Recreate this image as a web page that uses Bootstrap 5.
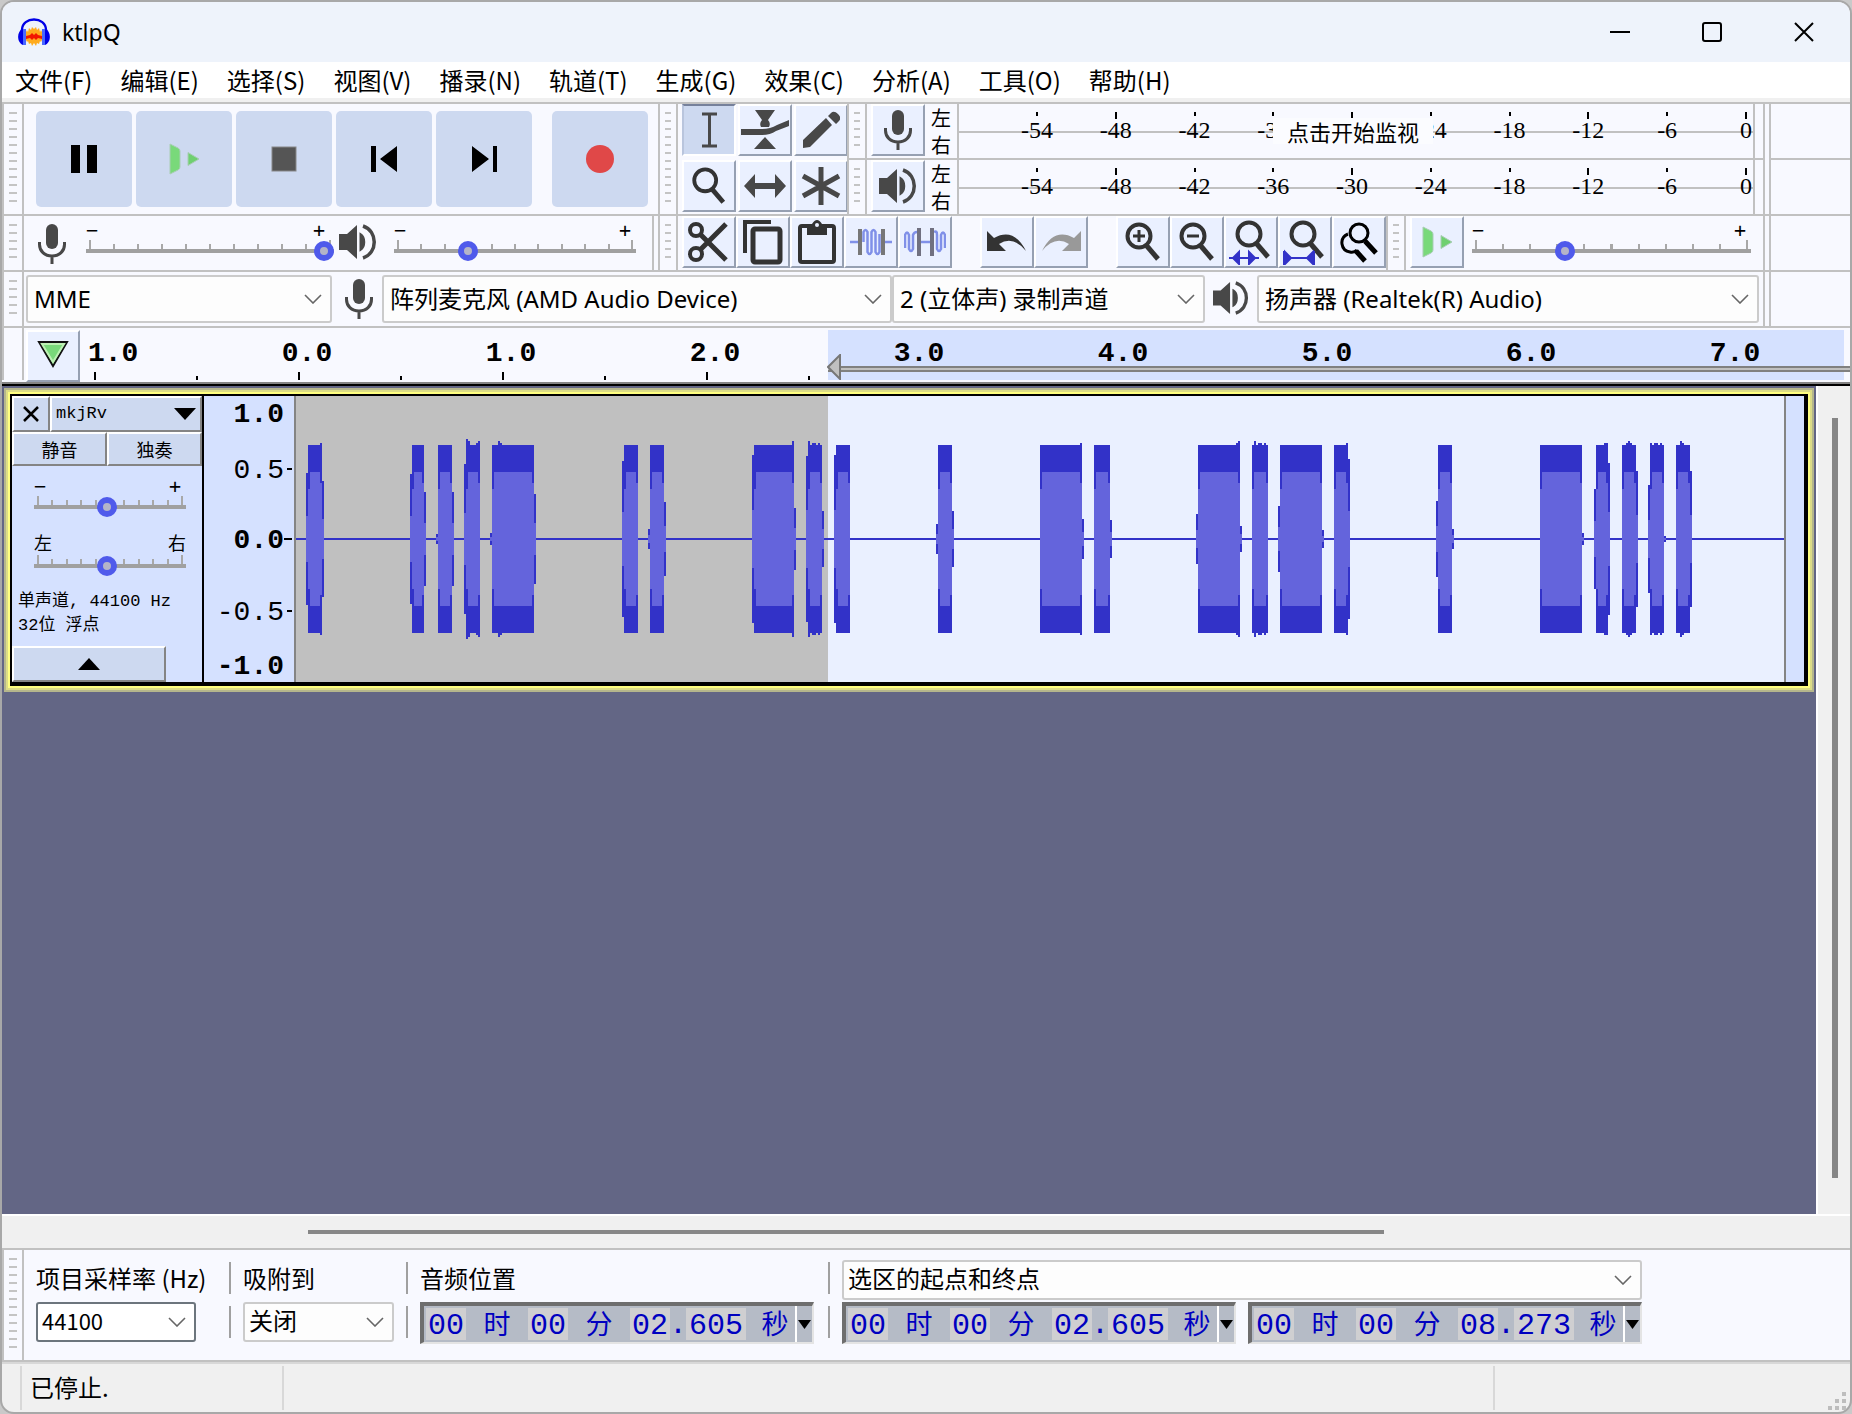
<!DOCTYPE html>
<html lang="zh-CN">
<head>
<meta charset="utf-8">
<meta name="viewport" content="width=device-width, initial-scale=1">
<title>ktlpQ</title>
<link rel="stylesheet" href="https://cdn.jsdelivr.net/npm/bootstrap@5.3.0/dist/css/bootstrap.min.css">
<style>
:root{--line:#c1c1c1;--face:#f8f9ff;--btn:#eaf0ff;--press:#cdd9f0;--sel:#d5e1ff;--ink:#484848}
html{background:#c9c9c9}
body{background:transparent;color:#000;font-family:"Noto Sans","Noto Sans CJK SC",sans-serif;font-size:23px;line-height:32px;overflow:hidden}
.app{border:2px solid #a8a8a8;border-radius:14px;background:#f0f0f0;overflow:hidden}
.titlebar{height:60px;background:#eef3fb}
.titlebar .caption{font-size:23px}
.win-btn{width:92px;height:58px;border-radius:0}
.menus{height:36px;background:#fff;font-family:"Noto Sans CJK SC",sans-serif;font-size:24px;padding-left:13px;gap:28px}
.menus a{color:#000;line-height:36px;white-space:nowrap}
.tools{background:var(--face);border-top:2px solid var(--line)}
.h-line{border-bottom:2px solid var(--line)}
.grip{width:20px;flex:none;border-right:2px solid var(--line);border-left:2px solid var(--line);padding:8px 5px}
.grip i{display:block;height:100%;background:repeating-linear-gradient(#c4c4c4 0 2px,transparent 2px 8px)}
.grip-first{width:22px}
.strip{height:56px}
.double{height:112px}
.big{width:96px;height:96px;background:var(--press);border-radius:5px;flex:none}
.tool{width:54px;height:52px;flex:none;background:var(--btn);border:2px solid;border-color:#fff #96a0b2 #96a0b2 #fff;border-radius:0}
.tool.on{background:var(--press);border-color:#76819b #fff #fff #b9c5dd}
.tool:hover{background:var(--btn);border-color:#fff #96a0b2 #96a0b2 #fff}
.toolgrid{width:165px;display:grid;grid-template-columns:56px 56px 53px;grid-template-rows:56px 56px}
.end{width:87px;flex:none;display:flex}
.end::before{content:"";width:8px;border-left:2px solid var(--line);border-right:2px solid var(--line)}
.lr{width:32px;font-family:"Noto Sans CJK SC",sans-serif;font-size:20px;line-height:27px;text-align:center}
.meter{position:relative;height:54px;border-left:2px solid var(--line);border-right:2px solid var(--line);background:linear-gradient(var(--line),var(--line)) 0 27px/100% 2px no-repeat;padding:8px 7px 0 78px;font-family:"Liberation Serif",serif;font-size:24px}
.meter span{width:0;display:flex;flex-direction:column;align-items:center;line-height:28px}
.meter span::before{content:"";width:2px;height:4px;background:#000;flex:none}
.meter span:nth-child(3n+2)::before,.meter span:last-of-type::before{height:7px;margin-bottom:-3px}
.hint{position:absolute;left:314px;top:14px;width:160px;height:26px;line-height:24px;text-align:center;background:#fbfcff;border:0;padding:0;font-family:"Noto Sans CJK SC",sans-serif;font-size:22px}
.slide{display:flex;flex-direction:column;min-width:0}
.slide .signs{display:flex;justify-content:space-between;padding-right:5px;font:20px/20px "DejaVu Sans Mono",monospace;height:20px}
.ticks{height:9px;padding:0 3px}
.ticks::before{content:"";display:block;height:9px;background:repeating-linear-gradient(to right,#a8a8a8 0 2px,transparent 2px calc((100% - 2px)/10)) 0 4px no-repeat,linear-gradient(#a8a8a8,#a8a8a8) 0 0/2px 9px no-repeat,linear-gradient(#a8a8a8,#a8a8a8) 100% 0/2px 9px no-repeat}
.slide input{appearance:none;-webkit-appearance:none;width:100%;height:20px;margin:-8px 0 0;background:linear-gradient(#a0a0a0,#a0a0a0) 0 8px/100% 4px no-repeat;display:block}
.slide input::-webkit-slider-thumb{-webkit-appearance:none;width:20px;height:20px;border-radius:50%;border:6px solid #4f5aeb;background:#b4b4c8}
.in-icon{margin:8px 20px 0 14px}
.out-icon{margin:8px 17px 0 5px}
.devices{padding:3px 4px 0 2px}
.combo{height:48px;border:2px solid #cbcbcb;border-radius:3px;color:#000;font:inherit;font-size:24px;line-height:40px;padding:0 36px 0 6px;background-color:#fdfdfd;background-position:right 8px center;background-size:18px 10px;
--bs-form-select-bg-img:url("data:image/svg+xml,%3csvg xmlns='http://www.w3.org/2000/svg' viewBox='0 0 18 10'%3e%3cpath fill='none' stroke='%23666' stroke-width='1.6' d='M1 1l8 8 8-8'/%3e%3c/svg%3e")}
.ruler-box{height:58px;background:var(--face);border-bottom:2px solid #000;box-shadow:inset 0 -2px 0 #848484}
.pin{width:54px;height:52px;margin:2px 0 0 2px}
.ruler{position:relative;overflow:hidden;font:bold 28px/34px "Liberation Mono",monospace;background:repeating-linear-gradient(to right,#000 0 2px,transparent 2px 204px) 14px 44px/100% 8px no-repeat,repeating-linear-gradient(to right,#000 0 2px,transparent 2px 204px) 116px 48px/100% 4px no-repeat;padding-top:9px}
.ruler span{width:204px;flex:none;text-align:center}
.ruler span:first-of-type{width:125px;text-align:left;padding-left:8px}
.range{position:absolute;left:748px;right:6px;top:2px;bottom:4px;background:var(--sel);z-index:-1}
.loop{position:absolute;left:748px;right:0;top:38px;height:6px;background:#c0c0c0;border:solid #808080;border-width:2px 0}
.head{position:absolute;left:747px;top:26px}
.canvas-area{background:#636685;min-height:400px;padding-right:2px}
.track{border:2px solid #b5b68c;margin:2px 0 0 2px;background:#dcdc86;padding:2px}
.track-in{border:2px solid #ffff80;background:#000;padding:2px 4px 4px 2px}
.tp{width:190px;flex:none;background:var(--sel);font-family:"Noto Sans CJK SC",sans-serif}
.pb{background:var(--press);border:2px solid;border-color:#fff #848484 #848484 #fff;border-radius:0;color:#000;padding:0}
.pb:hover{background:var(--press)}
.h36{height:36px}.h34{height:34px}
.tiny{font-size:18px;line-height:22px}
.mono-s{font-family:"Liberation Mono","Noto Sans CJK SC",monospace;font-size:17px;line-height:24px}
.knobs{padding:10px 16px 0 22px}
.pan{margin-top:14px;margin-bottom:2px}
.info{padding:14px 0 0 6px}
.vr{width:92px;flex:none;margin-left:2px;background:var(--sel);border-right:2px solid #848484}
.vr text{font-family:"Liberation Mono",monospace;font-size:28px}
.wave{background:linear-gradient(#c0c0c0,#c0c0c0) 0 0/532px 100% no-repeat var(--btn)}
.wave svg{height:286px;width:100%;display:block}
.tail{width:20px;flex:none;background:var(--sel);border-left:2px solid #848484}
.vbar{width:34px;flex:none;border-left:2px solid #fff;padding:32px 12px 36px 14px}
.thumb{background:#868686}
.hbar{height:36px;border-top:2px solid #fff;border-bottom:2px solid var(--line);padding:14px 0 0 306px}
.hbar .thumb{height:4px;width:1076px;max-width:80%}
.selbar{height:112px;background:var(--face);border-bottom:2px solid var(--line);font-family:"Noto Sans CJK SC",sans-serif;font-size:24px}
.selbar .grip{height:110px}
.selbar .combo{height:40px;line-height:30px;font-size:24px;padding:0 36px 4px 4px}
.selbar .combo.rate{font-size:22px}
.cellcol{padding-top:10px;display:flex;flex-direction:column;gap:2px}
.cap{height:40px;line-height:36px}
.vsep{width:2px;flex:none;margin-top:12px;height:76px;background:linear-gradient(#a0a0a0 0 32px,transparent 32px 44px,#a0a0a0 44px)}
.pair{gap:12px}
.timebox{height:42px;width:394px;background:#b5bbc6;border:solid;border-width:4px 2px 2px 4px;border-color:#6e6e6e #e4e4e4 #e4e4e4 #6e6e6e;color:#0000c0;font-size:27px;line-height:34px;padding-left:2px}
.timebox input{border:0;padding:4px 0 0;margin-top:2px;height:32px;width:40px;background:#cfcfd1;color:#0000c0;font:30px/28px "Liberation Mono",monospace;text-align:center;flex:none}
.timebox input.ms{width:60px}
.timebox span{width:62px;text-align:center;flex:none}
.timebox span.dot{width:16px;font:30px/38px "Liberation Mono",monospace;display:flex;justify-content:center}
.timebox .u3{width:44px;padding-left:14px}
.timebox button{border:0;border-left:2px solid #fff;background:#b5bbc6;width:17px;padding:0;display:flex;align-items:center;justify-content:center;margin-left:auto}
.status{height:50px;border-top:2px solid #d8d8d8;font-family:"Noto Sans CJK SC",sans-serif;font-size:24px}
.status div{border-left:2px solid #d8d8d8;padding-left:8px;margin:2px 0;line-height:42px}
svg{display:block}
</style>
<script src="https://cdn.jsdelivr.net/npm/bootstrap@5.3.0/dist/js/bootstrap.bundle.min.js"></script>
</head>
<body>
<svg width="0" height="0" class="position-absolute" aria-hidden="true">
<symbol id="mic" viewBox="0 0 28 40"><rect x="8" y="0" width="12" height="25" rx="6" fill="#484848"/><path d="M1.500 18v2.500c0 6.500 5 11.500 12.500 11.500s12.500-5 12.500-11.500V18M14 32v8" fill="none" stroke="#484848" stroke-width="3"/></symbol>
<symbol id="spk" viewBox="0 0 38 36"><path d="M0 10h8L18 1v34L8 26H0z" fill="#484848"/><path d="M21.500 10c5 3 5 13 0 16z" fill="#484848" stroke="#484848" stroke-width="2"/><path d="M24 2c15 5 15 27 0 32" fill="none" stroke="#484848" stroke-width="3.500"/></symbol>
<symbol id="lens" viewBox="0 0 40 42"><circle cx="16" cy="15" r="11.500" fill="none" stroke="#333" stroke-width="4"/><path d="M23 24l12 14" stroke="#333" stroke-width="5"/></symbol>
<symbol id="playg" viewBox="0 0 32 32"><path d="M2 1l8 4q2 1 2 3v16q0 2-2 3l-8 4z" fill="#79d97a" stroke="#a9cdb5"/><path d="M20 9.500l11 6.500-11 6.500z" fill="#6fd070" stroke="#a9cdb5"/></symbol>
</svg>
<div class="app d-flex flex-column min-vh-100">
<header class="titlebar d-flex align-items-center flex-shrink-0">
<svg class="ms-3" width="32" height="28" viewBox="0 0 32 28"><path d="M4 15V12C4 5 10 1.500 16 1.500S28 5 28 12v3" fill="none" stroke="#0000e6" stroke-width="2.400"/><path d="M5 10C-2 14-1 25 5 27zM27 10c7 4 6 15 0 17z" fill="#0000e6"/><rect x="5" y="11" width="3" height="16" fill="#4968ff"/><rect x="24" y="11" width="3" height="16" fill="#4968ff"/><path d="M8 14l1-2 1 2 1-4 2 2 1-3 2 2 2-2 1 3 2-2 1 4 1-2 1 2v8l-1 2-1-1-1 3-2-1-1 3-2-3-2 3-1-3-2 1-1-3-1 1-1-2z" fill="#ffab1c"/><path d="M8 18l4-1 2-2 2 2 2-2 2 2 4 1v3l-4-1-2 2-2-2-2 2-2-2-4 1z" fill="#f21800"/></svg>
<span class="caption ms-2 ps-1 flex-grow-1">ktlpQ</span>
<button class="btn p-0 win-btn" aria-label="最小化"><svg class="m-auto" width="22" height="22"><path d="M1 11h20" stroke="#000" stroke-width="2"/></svg></button>
<button class="btn p-0 win-btn" aria-label="最大化"><svg class="m-auto" width="22" height="22"><rect x="2" y="2" width="18" height="18" rx="2" fill="none" stroke="#000" stroke-width="2"/></svg></button>
<button class="btn p-0 win-btn" aria-label="关闭"><svg class="m-auto" width="22" height="22"><path d="M2 2l18 18M20 2L2 20" stroke="#000" stroke-width="2"/></svg></button>
</header>
<nav class="menus d-flex flex-shrink-0 mb-1">
<a class="text-decoration-none" href="#">文件(F)</a><a class="text-decoration-none" href="#">编辑(E)</a><a class="text-decoration-none" href="#">选择(S)</a><a class="text-decoration-none" href="#">视图(V)</a><a class="text-decoration-none" href="#">播录(N)</a><a class="text-decoration-none" href="#">轨道(T)</a><a class="text-decoration-none" href="#">生成(G)</a><a class="text-decoration-none" href="#">效果(C)</a><a class="text-decoration-none" href="#">分析(A)</a><a class="text-decoration-none" href="#">工具(O)</a><a class="text-decoration-none" href="#">帮助(H)</a>
</nav>
<section class="tools flex-shrink-0">
<div class="d-flex double h-line">
 <div class="grip grip-first"><i></i></div>
 <div class="d-flex gap-1 align-items-center flex-shrink-0 ps-2 ms-1" style="width:630px">
  <button class="btn big p-0" aria-label="暂停"><svg class="m-auto" width="26" height="28"><path d="M0 0h9v28H0zM16 0h10v28H16z"/></svg></button>
  <button class="btn big p-0" aria-label="播放"><svg class="m-auto" width="32" height="32"><use href="#playg"/></svg></button>
  <button class="btn big p-0" aria-label="停止"><svg class="m-auto" width="26" height="26"><rect x="1" y="1" width="24" height="24" fill="#555" stroke="#888"/></svg></button>
  <button class="btn big p-0" aria-label="跳至开头"><svg class="m-auto" width="26" height="26"><path d="M0 0h5v26H0zM26 0v26L9 13z"/></svg></button>
  <button class="btn big p-0" aria-label="跳至结尾"><svg class="m-auto" width="26" height="26"><path d="M26 0h-4v26h4zM1 0v26l17-13z"/></svg></button>
  <button class="btn big p-0 ms-3" aria-label="录制"><svg class="m-auto" width="28" height="28"><circle cx="14" cy="14" r="14" fill="#e04848"/></svg></button>
 </div>
 <div class="grip"><i></i></div>
 <div class="toolgrid ms-1">
  <button class="btn p-0 tool on" aria-label="选择工具"><svg class="m-auto" width="36" height="36"><path d="M11 2h15M11 34h15M18.500 2v32" stroke="#484848" stroke-width="3"/></svg></button>
  <button class="btn p-0 tool" aria-label="包络工具"><svg class="m-auto" width="48" height="40"><path d="M14 0h20l-7 10q3 3 1 7h-8q-2-4 1-7zM24 27l11 12H13z" fill="#484848"/><path d="M0 19h20q9 0 16-4l12-5v6l-13 5q-6 4-15 4H0z" fill="#484848"/></svg></button>
  <button class="btn p-0 tool" aria-label="绘制工具"><svg class="m-auto" width="38" height="38"><path d="M1 37v-8L24 7l6 7L8 36zM26 5l3-3q3-3 7 1t1 7l-3 3z" fill="#484848"/></svg></button>
  <button class="btn p-0 tool" aria-label="缩放工具"><svg class="m-auto" width="40" height="40" viewBox="0 0 40 42"><use href="#lens"/></svg></button>
  <button class="btn p-0 tool" aria-label="时间移动工具"><svg class="m-auto" width="42" height="24"><path d="M0 12L11 0v9h20V0l11 12-11 12v-9H11v9z" fill="#484848"/></svg></button>
  <button class="btn p-0 tool" aria-label="多功能工具"><svg class="m-auto" width="40" height="40"><path d="M20 1v38M2 10l36 20M38 10L2 30" stroke="#484848" stroke-width="5"/></svg></button>
 </div>
 <div class="flex-grow-1 d-flex flex-column">
  <div class="d-flex h-line strip">
   <div class="grip"><i></i></div>
   <button class="btn p-0 tool ms-1" aria-label="录制电平"><svg class="m-auto" width="28" height="40"><use href="#mic"/></svg></button>
   <div class="lr">左<br>右</div>
   <div class="meter flex-grow-1 me-2 d-flex justify-content-between"><span>-54</span><span>-48</span><span>-42</span><span>-36</span><span>-30</span><span>-24</span><span>-18</span><span>-12</span><span>-6</span><span>0</span><button class="hint">点击开始监视</button></div>
  </div>
  <div class="d-flex strip">
   <div class="grip"><i></i></div>
   <button class="btn p-0 tool ms-1" aria-label="播放电平"><svg class="m-auto" width="38" height="36"><use href="#spk"/></svg></button>
   <div class="lr">左<br>右</div>
   <div class="meter flex-grow-1 me-2 d-flex justify-content-between"><span>-54</span><span>-48</span><span>-42</span><span>-36</span><span>-30</span><span>-24</span><span>-18</span><span>-12</span><span>-6</span><span>0</span></div>
  </div>
 </div>
 <div class="end"><div class="flex-grow-1"><div class="h-line strip"></div></div></div>
</div>
<div class="d-flex strip h-line">
 <div class="grip grip-first"><i></i></div>
 <div class="d-flex flex-shrink-0" style="width:634px">
  <svg class="flex-shrink-0 in-icon" width="28" height="40"><use href="#mic"/></svg>
  <div class="slide pt-1 flex-shrink-0" style="width:248px"><div class="signs"><span>−</span><span class="pe-1">+</span></div><div class="ticks"></div><input type="range" aria-label="录制音量" value="100"></div>
  <svg class="flex-shrink-0 out-icon" width="38" height="36"><use href="#spk"/></svg>
  <div class="slide pt-1 flex-grow-1"><div class="signs"><span>−</span><span>+</span></div><div class="ticks"></div><input type="range" aria-label="播放音量" value="29"></div>
  <div class="ms-3" style="width:6px;border-left:2px solid var(--line)"></div>
 </div>
 <div class="grip"><i></i></div>
 <div class="d-flex ps-1 flex-shrink-0">
  <button class="btn p-0 tool" aria-label="剪切"><svg class="m-auto" width="42" height="40"><g fill="none" stroke="#333" stroke-width="4"><circle cx="8" cy="8" r="6"/><circle cx="8" cy="32" r="6"/><path d="M12 12l26 26M12 28L38 2" stroke-width="5"/></g></svg></button>
  <button class="btn p-0 tool" aria-label="复制"><svg class="m-auto" width="42" height="46"><path d="M3 34V3h26" fill="none" stroke="#333" stroke-width="4"/><rect x="11" y="10" width="27" height="33" rx="2" fill="none" stroke="#333" stroke-width="5"/></svg></button>
  <button class="btn p-0 tool" aria-label="粘贴"><svg class="m-auto" width="40" height="46"><rect x="3" y="7" width="34" height="36" rx="2" fill="none" stroke="#333" stroke-width="4"/><path d="M10 5h5q5-8 10 0h5v11H10z" fill="#333"/><circle cx="20" cy="6" r="2" fill="#eaf0ff"/></svg></button>
  <button class="btn p-0 tool" aria-label="修剪"><svg class="m-auto" width="42" height="28"><path d="M0 14h9M33 14h9M13.500 14V4q2-4 4 0v20q2 4 4 0V4q2-4 4 0v20q2 4 4 0V6" fill="none" stroke="#8090e8" stroke-width="2.500"/><path d="M8 1h4v26H8zM31 1h4v26h-4z" fill="#777"/></svg></button>
  <button class="btn p-0 tool" aria-label="静音"><svg class="m-auto" width="42" height="34"><path d="M1 23V10q2-5 4 0v14q2 4 4 0V10q1-3 4-3M17 17h9M30 7q3-2 3 3v14q2 4 4 0V10q2-5 4 0v13" fill="none" stroke="#8090e8" stroke-width="2.500"/><path d="M13 3h4v28h-4zM26 3h4v28h-4z" fill="#707080"/></svg></button>
 </div>
 <div class="d-flex ps-4 ms-1 flex-shrink-0">
  <button class="btn p-0 tool" aria-label="撤销"><svg class="m-auto" width="42" height="24"><path d="M1 1v20h19l-7-7q14-9 27 7Q28-3 8 8z" fill="#333"/></svg></button>
  <button class="btn p-0 tool" aria-label="重做"><svg class="m-auto" width="42" height="24"><path d="M41 1v20H22l7-7Q15 5 2 21 14-3 34 8z" fill="#999"/></svg></button>
 </div>
 <div class="d-flex ps-4 ms-1 flex-shrink-0">
  <button class="btn p-0 tool" aria-label="放大"><svg class="m-auto" width="40" height="42"><use href="#lens"/><path d="M10 15h12M16 9v12" stroke="#333" stroke-width="3"/></svg></button>
  <button class="btn p-0 tool" aria-label="缩小"><svg class="m-auto" width="40" height="42"><use href="#lens"/><path d="M10 15h12" stroke="#333" stroke-width="3"/></svg></button>
  <button class="btn p-0 tool" aria-label="缩放至选区"><svg class="m-auto" width="44" height="46"><use href="#lens" x="4" y="0" width="40" height="42"/><path d="M0 39h30M10 33v12l-6-6zM20 33v12l6-6z" fill="#3232c8" stroke="#3232c8" stroke-width="2"/></svg></button>
  <button class="btn p-0 tool" aria-label="适应项目"><svg class="m-auto" width="44" height="46"><use href="#lens" x="4" y="0" width="40" height="42"/><path d="M1 32v14M31 32v14M1 39h30M2 33v12l6-6zM30 33v12l-6-6z" fill="#3232c8" stroke="#3232c8" stroke-width="2"/></svg></button>
  <button class="btn p-0 tool" aria-label="缩放切换"><svg class="m-auto" width="38" height="42"><g fill="none" stroke="#000"><circle cx="19" cy="12" r="9" stroke-width="3"/><path d="M8 13q-7 3-6 10t8 8q4 1 7-2" stroke-width="3"/><path d="M25 20l11 12M16 30l9 10" stroke-width="5"/></g></svg></button>
 </div>
 <div class="grip"><i></i></div>
 <button class="btn p-0 tool ms-1" aria-label="按速度播放"><svg class="m-auto" width="32" height="32"><use href="#playg"/></svg></button>
 <div class="slide pt-1 flex-grow-1 ms-2 me-2 pe-1"><div class="signs"><span>−</span><span>+</span></div><div class="ticks"></div><input type="range" aria-label="播放速度" value="32"></div>
 <div class="end"></div>
</div>
<div class="d-flex strip h-line">
 <div class="grip grip-first"><i></i></div>
 <div class="flex-grow-1 d-flex devices">
  <select class="form-select combo flex-shrink-0" style="width:306px" aria-label="音频主机"><option>MME</option></select>
  <svg class="flex-shrink-0 mt-1 ms-2 ps-1 me-2" width="34" height="40" viewBox="0 0 28 40"><use href="#mic"/></svg>
  <select class="form-select combo flex-shrink-0" style="width:510px" aria-label="录制设备"><option>阵列麦克风 (AMD Audio Device)</option></select>
  <select class="form-select combo flex-shrink-0" style="width:313px" aria-label="录制声道"><option>2 (立体声) 录制声道</option></select>
  <svg class="flex-shrink-0 mt-1 mx-2" width="36" height="38" viewBox="0 0 38 36"><use href="#spk"/></svg>
  <select class="form-select combo" aria-label="播放设备"><option>扬声器 (Realtek(R) Audio)</option></select>
 </div>
 <div class="end"></div>
</div>
</section>
<section class="d-flex ruler-box flex-shrink-0">
 <div style="width:22px;border-right:2px solid var(--line);border-left:2px solid var(--line)" class="flex-shrink-0 mb-1"></div>
 <button class="btn p-0 tool pin" aria-label="固定播放头"><svg class="m-auto" width="32" height="30"><path d="M2 1h28L16 25z" fill="#79d97a" stroke="#111" stroke-width="2"/><path d="M5 3h22L16 21z" fill="none" stroke="#bdf0b4" stroke-width="2"/></svg></button>
 <div class="ruler flex-grow-1 d-flex" style="z-index:0"><div class="range"></div><span>1.0</span><span>0.0</span><span>1.0</span><span>2.0</span><span>3.0</span><span>4.0</span><span>5.0</span><span>6.0</span><span>7.0</span><div class="loop"></div><svg class="head" width="14" height="26"><path d="M13 1v24L1 13z" fill="#c0c0c0" stroke="#777" stroke-width="2"/></svg></div>
</section>
<main class="d-flex flex-grow-1">
 <div class="canvas-area flex-grow-1">
  <div class="track"><div class="track-in d-flex">
   <div class="tp d-flex flex-column">
    <div class="d-flex"><button class="pb h36" style="width:38px" aria-label="关闭轨道"><svg class="m-auto" width="16" height="16"><path d="M1 1l14 14M15 1L1 15" stroke="#000" stroke-width="2.500"/></svg></button><button class="pb h36 flex-grow-1 d-flex align-items-center justify-content-between px-1 mono-s"><span>mkjRv</span><svg width="22" height="12"><path d="M0 0h22L11 12z"/></svg></button></div>
    <div class="d-flex"><button class="pb h34 w-50 tiny">静音</button><button class="pb h34 w-50 tiny">独奏</button></div>
    <div class="knobs"><div class="slide"><div class="signs"><span>−</span><span>+</span></div><div class="ticks"></div><input type="range" aria-label="增益" value="48"></div>
    <div class="pan d-flex justify-content-between tiny"><span>左</span><span>右</span></div><div class="slide"><div class="ticks"></div><input type="range" aria-label="声像" value="48"></div></div>
    <div class="mono-s info text-nowrap">单声道, 44100 Hz<br>32位 浮点</div>
    <button class="pb h36 mt-auto" style="width:154px" aria-label="折叠"><svg class="m-auto" width="22" height="12"><path d="M0 12h22L11 0z"/></svg></button>
   </div>
   <div class="vr position-relative opacity-100"><svg width="90" height="286"><g text-anchor="end"><text x="80" y="26" font-weight="bold">1.0</text><text x="80" y="82">0.5</text><text x="80" y="152" font-weight="bold">0.0</text><text x="80" y="224">-0.5</text><text x="80" y="278" font-weight="bold">-1.0</text></g><path d="M83 73h5M80 143h8M83 215h5" stroke="#000" stroke-width="2"/></svg></div>
   <div class="wave flex-grow-1"><svg id="wave" viewBox="0 0 1488 286" preserveAspectRatio="none" shape-rendering="crispEdges"></svg></div>
   <div class="tail"></div>
  </div></div>
 </div>
 <div class="vbar d-flex"><div class="thumb flex-grow-1 ms-0"></div></div>
</main>
<div class="hbar flex-shrink-0"><div class="thumb"></div></div>
<section class="selbar d-flex flex-shrink-0">
 <div class="grip grip-first"><i></i></div>
 <div class="cellcol ms-2 ps-1 flex-shrink-0" style="width:197px"><label class="cap" for="rate">项目采样率 (Hz)</label><select id="rate" class="form-select combo rate border-secondary bg-white" style="width:160px"><option>44100</option></select></div>
 <div class="vsep me-2 ms-n1"></div>
 <div class="cellcol ms-1 flex-shrink-0" style="width:163px"><label class="cap" for="snap">吸附到</label><select id="snap" class="form-select combo" style="width:151px"><option>关闭</option></select></div>
 <div class="vsep me-2"></div>
 <div class="cellcol ms-1 flex-shrink-0" style="width:408px"><span class="cap">音频位置</span>
  <div class="timebox d-flex" role="group" aria-label="音频位置"><input aria-label="时" value="00"><span>时</span><input aria-label="分" value="00"><span>分</span><input aria-label="秒" value="02"><span class="dot">.</span><input class="ms" aria-label="毫秒" value="605"><span class="u3">秒</span><button aria-label="格式"><svg width="13" height="9"><path d="M0 0h13L6.500 9z"/></svg></button></div></div>
 <div class="vsep me-2"></div>
 <div class="cellcol ms-1 flex-shrink-0"><select class="form-select combo" aria-label="选区"><option>选区的起点和终点</option></select>
  <div class="d-flex pair">
  <div class="timebox d-flex" role="group" aria-label="选区起点"><input aria-label="时" value="00"><span>时</span><input aria-label="分" value="00"><span>分</span><input aria-label="秒" value="02"><span class="dot">.</span><input class="ms" aria-label="毫秒" value="605"><span class="u3">秒</span><button aria-label="格式"><svg width="13" height="9"><path d="M0 0h13L6.500 9z"/></svg></button></div>
  <div class="timebox d-flex" role="group" aria-label="选区终点"><input aria-label="时" value="00"><span>时</span><input aria-label="分" value="00"><span>分</span><input aria-label="秒" value="08"><span class="dot">.</span><input class="ms" aria-label="毫秒" value="273"><span class="u3">秒</span><button aria-label="格式"><svg width="13" height="9"><path d="M0 0h13L6.500 9z"/></svg></button></div>
  </div></div>
</section>
<footer class="status d-flex flex-shrink-0">
 <div style="width:262px;margin-left:18px">已停止.</div><div class="flex-grow-1"></div><div style="width:357px" class="d-flex justify-content-end align-items-end pe-1"><svg width="18" height="18"><path d="M14 0h4v4h-4zM7 7h4v4H7zM14 7h4v4h-4zM0 14h4v4H0zM7 14h4v4H7zM14 14h4v4h-4z" fill="#bdbdbd"/></svg></div>
</footer>
</div>
<script>
// Each burst: start, end, half height of the column before, of the column after, peaks as [offset, extra height]
const bursts=[[12,26,66,58,[[12,2]]],[116,128,65,47],[142,156,5,47],[170,184,75,0,[[0,6],[2,4],[10,2],[12,4]]],[196,238,6,45,[[6,4],[8,2]]],[328,342,78,0],[354,368,10,37],[458,498,84,31,[[38,4]]],[512,526,83,28,[[0,4],[4,2],[6,2],[10,2]]],[540,554,84,0],[642,656,15,28],[744,786,0,20,[[40,2]]],[798,814,0,19],[902,944,25,13,[[38,2],[40,4]]],[956,972,0,0,[[2,4],[6,2],[8,2],[12,2]]],[984,1026,33,9],[1038,1052,0,80,[[12,2]]],[1142,1156,38,10],[1244,1286,0,6],[1300,1312,50,76,[[8,2],[10,2]]],[1326,1340,0,68,[[4,2],[6,4],[8,2]]],[1354,1368,54,3,[[0,2],[4,2],[6,2],[10,2]]],[1380,1394,0,68,[[4,4],[6,2]]]];
const dark='#3232c8',light='#6464dc',mid=143;
const bar=(x,w,h,c)=>`<rect x="${x}" y="${mid-h}" width="${w}" height="${2*h}" fill="${c}"/>`;
let out=`<rect x="0" y="142" width="1488" height="2" fill="${dark}"/>`;
for(const [a,b,l,r,p] of bursts){
 out+=bar(a,b-a,94,dark);
 (p||[]).forEach(([o,h])=>out+=bar(a+o,2,94+h,dark));
 out+=bar(a,2,50,light)+bar(a+2,b-a-4,67,light)+bar(b-2,2,56,light);
 if(l)out+=bar(a-2,2,l,dark)+bar(a-2,2,Math.round(l*.35),light);
 if(r)out+=bar(b,2,r,dark)+bar(b,2,Math.round(r*.35),light);
}
document.getElementById('wave').innerHTML=out;
</script>
</body>
</html>
